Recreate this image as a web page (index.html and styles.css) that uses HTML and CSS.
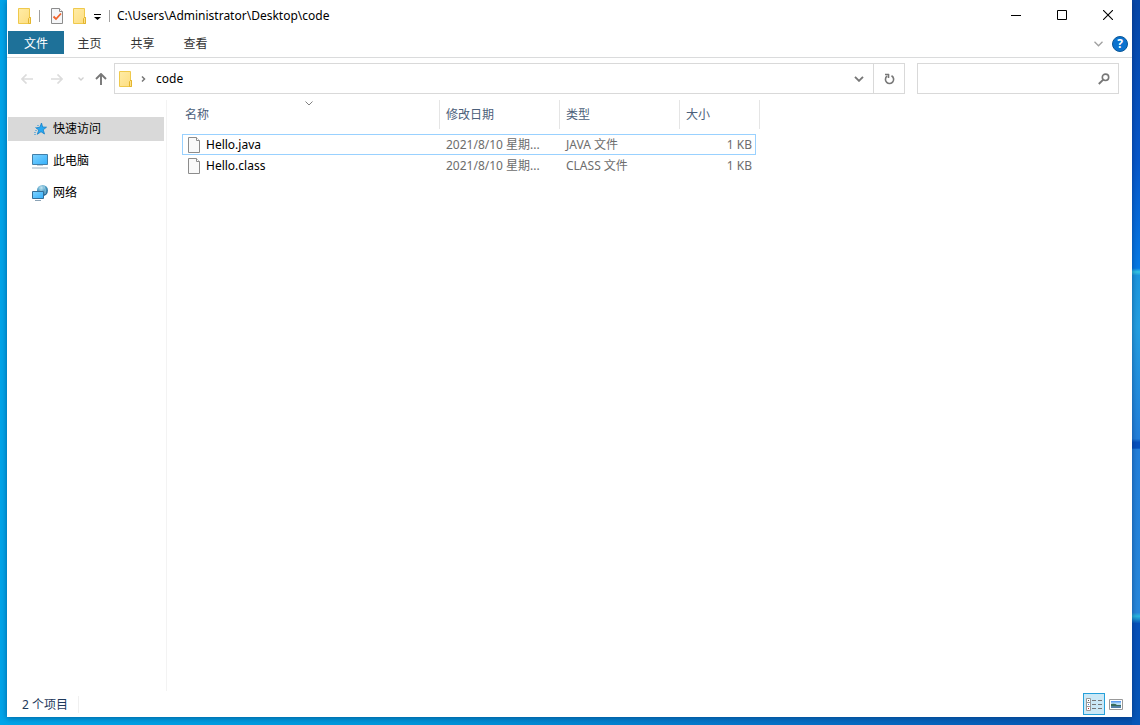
FILE: index.html
```html
<!DOCTYPE html>
<html lang="zh-CN">
<head>
<meta charset="utf-8">
<title>code</title>
<link rel="stylesheet" href="styles.css">
</head>
<body>
<svg class="defs" width="0" height="0" aria-hidden="true">
  <defs>
    <linearGradient id="gold" x1="0" y1="0" x2="1" y2="1"><stop offset="0" stop-color="#ffeca6"/><stop offset="1" stop-color="#fddd80"/></linearGradient>
    <linearGradient id="screen" x1="0" y1="0" x2="1" y2="1"><stop offset="0" stop-color="#7fd3ff"/><stop offset="1" stop-color="#35b0fb"/></linearGradient>
    <radialGradient id="globe" cx=".4" cy=".25" r=".8"><stop offset="0" stop-color="#c4e6f2"/><stop offset=".5" stop-color="#4c9cc4"/><stop offset="1" stop-color="#1d5d8c"/></radialGradient>
    <symbol id="folder" viewBox="0 0 14 16"><path d="M.5.5h11v8.500l1 .5v6H.5z" fill="url(#gold)" stroke="#efc94c"/><path d="M10.500 15.500v-5l1.500-1.500.5 1v5.500z" fill="#ffe28a" stroke="#e3b52f"/></symbol>
    <symbol id="page" viewBox="0 0 12 16"><path d="M.5.5h8l3 3v12H.5z" fill="#f9f9f9" stroke="#8c8c8c"/><path d="M8.500.5v3h3" fill="#fff" stroke="#8c8c8c"/></symbol>
  </defs>
</svg>
<div class="window">
  <header class="titlebar">
    <svg class="folder"><use href="#folder"/></svg>
    <span class="rule rule-first"></span>
    <button class="quick" aria-label="属性"><svg width="12" height="16" viewBox="0 0 12 16"><path d="M.5.5h8l3 3v12H.5z" fill="#f5f6f8" stroke="#8c8c8c"/><path d="M8.500.5v3h3" fill="#fff" stroke="#8c8c8c"/><path d="M2.500 8.500 5 11l5-5.500" fill="none" stroke="#f0622b" stroke-width="1.800"/></svg></button>
    <button class="quick" aria-label="新建文件夹"><svg class="folder"><use href="#folder"/></svg></button>
    <button class="quick customize" aria-label="自定义快速访问工具栏"><svg width="7" height="6" viewBox="0 0 7 6"><path d="M0 0h7v1H0zM0 3h7L3.500 6z"/></svg></button>
    <span class="rule"></span>
    <h1 class="title">C:\Users\Administrator\Desktop\code</h1>
    <div class="caption">
      <button aria-label="最小化"><svg width="10" height="10" viewBox="0 0 10 10"><path d="M0 5h10v1H0z"/></svg></button>
      <button aria-label="最大化"><svg width="10" height="10" viewBox="0 0 10 10"><path d="M.5.5h9v9h-9z" fill="none" stroke="#000"/></svg></button>
      <button aria-label="关闭"><svg width="10" height="10" viewBox="0 0 10 10"><path d="m0 0 10 10M10 0 0 10" fill="none" stroke="#000" stroke-width="1.100"/></svg></button>
    </div>
  </header>
  <nav class="ribbon">
    <button class="tab tab-file">文件</button>
    <button class="tab">主页</button>
    <button class="tab">共享</button>
    <button class="tab">查看</button>
    <button class="expand" aria-label="展开功能区"><svg width="9" height="6" viewBox="0 0 9 6"><path d="m.5.8 4 4 4-4" fill="none" stroke="#a0a0a0" stroke-width="1.300"/></svg></button>
    <button class="help" aria-label="帮助">?</button>
  </nav>
  <div class="navbar">
    <button class="back" aria-label="返回"><svg width="12" height="10" viewBox="0 0 12 10"><path d="M12 5H1m4.500-4.500L1 5l4.500 4.500" fill="none" stroke="#dcdcdc" stroke-width="1.700"/></svg></button>
    <button class="forward" aria-label="前进"><svg width="12" height="10" viewBox="0 0 12 10"><path d="M0 5h11M6.500.5 11 5 6.500 9.500" fill="none" stroke="#dcdcdc" stroke-width="1.700"/></svg></button>
    <button class="recent" aria-label="最近位置"><svg width="6" height="4" viewBox="0 0 6 4"><path d="m.5.5 2.500 2.500L5.500.5" fill="none" stroke="#d0d0d0" stroke-width="1.300"/></svg></button>
    <button class="up" aria-label="上移"><svg width="12" height="12" viewBox="0 0 12 12"><path d="M6 12V1M1 6l5-5 5 5" fill="none" stroke="#777" stroke-width="1.900"/></svg></button>
    <div class="address">
      <svg class="folder"><use href="#folder"/></svg>
      <svg class="crumb" width="5" height="6" viewBox="0 0 5 6"><path d="m1 .5 2.500 2.500L1 5.500" fill="none" stroke="#777" stroke-width="1.500"/></svg>
      <span class="path">code</span>
      <button class="drop" aria-label="历史记录"><svg width="10" height="6" viewBox="0 0 10 6"><path d="m1 .8 4 4 4-4" fill="none" stroke="#777" stroke-width="1.900"/></svg></button>
      <button class="refresh" aria-label="刷新"><svg width="11" height="12" viewBox="0 0 11 12"><path d="M7.500 2.800A4.100 4.100 0 1 1 3 3.200M1 1.500h4M4.500 1v4" fill="none" stroke="#777" stroke-width="1.600"/></svg></button>
    </div>
    <label class="search"><input type="text" aria-label="搜索"><svg width="12" height="12" viewBox="0 0 12 12"><circle cx="7.500" cy="4.300" r="3.200" fill="none" stroke="#777" stroke-width="1.600"/><path d="M5 6.800.8 11" stroke="#777" stroke-width="1.900"/></svg></label>
  </div>
  <div class="body">
    <aside class="tree">
      <a href="#quick" class="place selected"><svg width="16" height="16" viewBox="0 0 16 16"><path d="m9.500 2 1.100 4 3.900.2-3.300 2.600 1.300 4.200-3.500-2.300-3.700 2.600 1.500-4.300-2.800-2.100 3.900-.7z" fill="#26a8f2" stroke="#1680c6" stroke-width=".8"/><path d="M5 4.500h2M3 6.500h2M3 9.500h2M2 11.500h2M2 13.500h2" stroke="#5fa9d8" stroke-width=".8"/></svg>快速访问</a>
      <a href="#pc" class="place"><svg width="16" height="16" viewBox="0 0 16 16"><path d="M.5 1.500h15v10H.5z" fill="url(#screen)" stroke="#417fa9"/><path d="M5 12.500h6" stroke="#c1d0dc"/><path d="M0 15h16" stroke="#9fb2c1"/></svg>此电脑</a>
      <a href="#network" class="place"><svg width="16" height="16" viewBox="0 0 16 16"><circle cx="10.500" cy="5.500" r="5.500" fill="url(#globe)"/><path d="M7 2.500q3 2 2 4M12 1q2 3 1 8" fill="none" stroke="#a5d6e8" stroke-width=".7"/><path d="M.5 6.500h11v7H.5z" fill="url(#screen)" stroke="#356f98"/><path d="M3 15.500h6" stroke="#8ba3b6"/></svg>网络</a>
    </aside>
    <main class="content">
      <table class="files">
        <thead>
          <tr><th class="col-name" scope="col">名称<svg class="sort" width="8" height="5" viewBox="0 0 8 5"><path d="m.5.5 3.500 3.500L7.500.5" fill="none" stroke="#808080"/></svg></th><th class="col-date" scope="col">修改日期</th><th class="col-type" scope="col">类型</th><th class="col-size" scope="col">大小</th></tr>
        </thead>
        <tbody>
          <tr class="focused"><td><div class="file"><svg width="12" height="16"><use href="#page"/></svg>Hello.java</div></td><td>2021/8/10 星期...</td><td>JAVA 文件</td><td class="size">1 KB</td></tr>
          <tr><td><div class="file"><svg width="12" height="16"><use href="#page"/></svg>Hello.class</div></td><td>2021/8/10 星期...</td><td>CLASS 文件</td><td class="size">1 KB</td></tr>
        </tbody>
      </table>
    </main>
  </div>
  <footer class="status">
    <span class="count">2 个项目</span>
    <button class="view view-on" aria-label="详细信息"><svg width="16" height="13" viewBox="0 0 16 13"><path d="M.5.5h4v12h-4zM0 4.500h5M0 8.500h5" fill="#fff" stroke="#999"/><path d="M2 2h1v1H2z" fill="#555"/><path d="M2 6h1v1H2z" fill="#4b7fe0"/><path d="M2 10h1v1H2z" fill="#c22"/><path d="M6 2.500h4m2 0h4M6 6.500h4m2 0h4M6 10.500h4m2 0h4" stroke="#777"/></svg></button>
    <button class="view" aria-label="大缩略图"><svg width="14" height="11" viewBox="0 0 14 11"><path d="M.5.5h13v10H.5z" fill="#fff" stroke="#999"/><path d="M2 2h10v7H2z" fill="#b5dcf7"/><path d="M2 2h10v1.500H2z" fill="#5b9cf0"/><path d="M2 5q4-1 6 1h4v1H2z" fill="#386b5b"/><path d="M2 7h10v2H2z" fill="#527fa6"/></svg></button>
  </footer>
</div>
</body>
</html>
```
FILE: styles.css
```css
* { box-sizing: border-box; }

body {
  margin: 0;
  height: 100vh;
  padding: 0 8px 8px 7px;
  font: 12px/16px "Noto Sans", "Noto Sans CJK SC", sans-serif;
  color: #000;
  background:
    linear-gradient(#0647a8 0, #0757ca 22%, #067ae6 37%, #35c8e5 37.500%, #1d97df 38%, #24a0e2 45%, #2380db 60.500%, #0651bf 61%, #0651bf 61.800%, #2380db 62%, #2788dc 84.500%, #28b9e0 85%, #0751ba 86%, #0757b8) right / 8px 100% no-repeat,
    linear-gradient(90deg, #00a5ea, #0098dc 35%, #0676ca 65%, #0652b0);
}

button {
  display: flex;
  align-items: center;
  justify-content: center;
  padding: 0;
  border: 0;
  background: none;
  font: inherit;
  color: inherit;
}

svg { display: block; flex: none; }
.defs { position: absolute; }
.folder { width: 14px; height: 16px; }

.window {
  display: flex;
  flex-direction: column;
  height: 100%;
  background: #fff;
  box-shadow: 0 1px 6px rgba(0, 30, 80, .5);
}

.titlebar {
  display: flex;
  align-items: center;
  height: 31px;
  padding-left: 11px;
}
.rule { width: 1px; height: 12px; margin-right: 7px; background: #a0a0a0; }
.rule-first { margin: 0 11px 0 7px; }
.quick { margin-right: 10px; }
.quick + .quick { margin-right: 7px; }
.quick.customize { margin: 3px 8px 0 0; }
.title { margin: 0; font-size: 12px; font-weight: 400; }
.caption { display: flex; height: 100%; margin-left: auto; padding: 0 1px 2px 0; }
.caption button { width: 46px; }

.ribbon {
  display: flex;
  align-items: center;
  height: 27px;
  padding: 0 4px 3px 1px;
  border-bottom: 1px solid #dadbdc;
  color: #333;
}
.tab { width: 53px; height: 23px; padding: 2px 2px 0 0; }
.tab-file { width: 56px; padding-right: 0; color: #fff; background: #1e7199; }
.expand { margin: 3px 9px 0 auto; }
.help {
  width: 16px;
  height: 16px;
  margin-top: 2px;
  border: 1px solid #0a5697;
  border-radius: 50%;
  font-weight: 700;
  color: #fff;
  background: #0b72ce;
}

.navbar { display: flex; align-items: center; height: 42px; padding: 0 13px 1px 14px; }
.forward { margin-left: 18px; }
.recent { margin-left: 15px; }
.up { margin: 0 7px 0 11px; }
.address {
  display: flex;
  flex: 1;
  align-items: center;
  height: 31px;
  padding-left: 4px;
  border: 1px solid #d9d9d9;
}
.crumb { margin: 0 10px 0 8px; }
.drop { width: 29px; height: 100%; margin-left: auto; }
.refresh { width: 31px; height: 100%; border-left: 1px solid #d9d9d9; }
.search {
  display: flex;
  align-items: center;
  width: 202px;
  height: 31px;
  margin-left: 12px;
  padding: 0 8px;
  border: 1px solid #d9d9d9;
}
.search input { flex: 1; min-width: 0; border: 0; outline: 0; font: inherit; }

.body { display: flex; flex: 1; min-height: 0; }
.tree {
  display: flex;
  flex-direction: column;
  gap: 8px;
  width: 160px;
  padding: 17px 2px 0 1px;
  border-right: 1px solid #f3f3f3;
}
.place {
  display: flex;
  align-items: center;
  gap: 5px;
  height: 24px;
  padding-left: 24px;
  color: inherit;
  text-decoration: none;
}
.selected { background: #d9d9d9; }
.content { flex: 1; padding-left: 15px; }

.files { border-collapse: separate; border-spacing: 0; table-layout: fixed; width: 574px; }
.files th {
  height: 29px;
  padding: 0 6px;
  border-right: 1px solid #e5e5e5;
  font-weight: 400;
  text-align: left;
  color: #4c607a;
}
.files .col-name { position: relative; width: 258px; padding-left: 3px; }
.sort { position: absolute; top: 1px; left: 123px; }
.col-date, .col-type { width: 120px; }
.files .col-size { position: relative; width: 76px; border-right: 0; }
.col-size::after {
  content: "";
  position: absolute;
  top: 0;
  right: -4px;
  width: 1px;
  height: 100%;
  background: #e5e5e5;
}
.files thead::after { content: ""; display: block; height: 5px; }
.files td {
  height: 21px;
  padding: 0 6px;
  color: #6d6d6d;
  white-space: nowrap;
}
.files td:first-child { padding-left: 6px; color: #000; }
.files .size { padding-right: 4px; text-align: right; }
.focused { outline: 1px solid #99d1ff; outline-offset: -1px; }
.file { display: flex; align-items: center; gap: 6px; }

.status { display: flex; align-items: center; height: 26px; padding: 0 5px 0 15px; }
.count { padding: 1px 10px 0 0; border-right: 1px solid #f0f0f0; color: #1e395b; }
.view { width: 22px; height: 22px; }
.view-on { margin-left: auto; border: 1px solid #26a0da; background: #cbe8f6; }
```
